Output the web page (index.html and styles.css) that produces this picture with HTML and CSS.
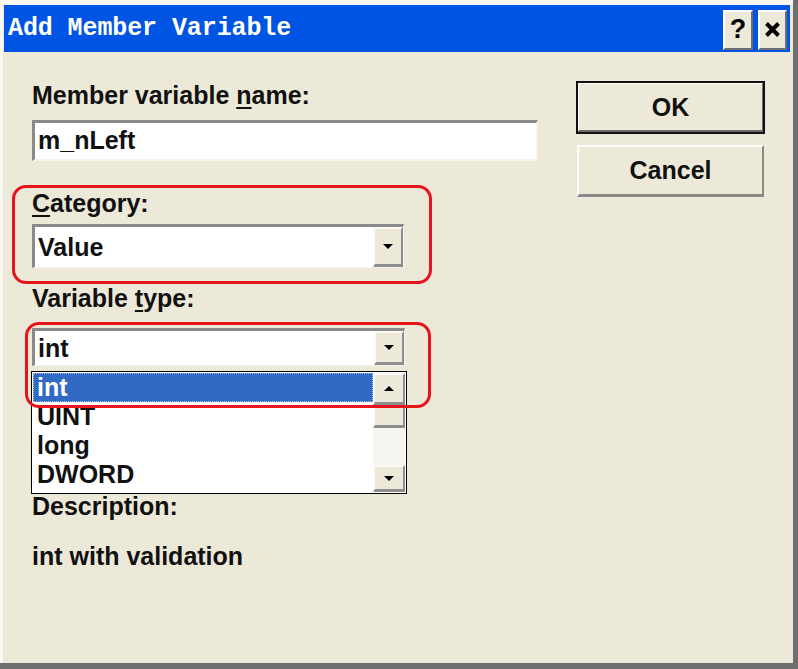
FILE: index.html
```html
<!DOCTYPE html>
<html lang="en">

<head>
    <meta charset="UTF-8">
    <title>Add Member Variable</title>
    <link rel="stylesheet" href="styles.css">
</head>

<body>
    <div class="window">
        <div class="title-bar">
            <span class="title">Add Member Variable</span>
            <div class="title-buttons">
                <div class="title-btn help">?</div>
                <div class="title-btn close">
                    <svg width="17" height="17" viewBox="0 0 17 17">
                        <path d="M2.5 2.5 L14.5 14.5 M14.5 2.5 L2.5 14.5" stroke="#000" stroke-width="4" />
                    </svg>
                </div>
            </div>
        </div>

        <div class="client">
            <div class="fields">
                <div class="label">Member variable <u>n</u>ame:</div>
                <div class="edit">m_nLeft</div>

                <div class="label label-category"><u>C</u>ategory:</div>
                <div class="combo combo-value">
                    <span class="combo-text">Value</span>
                    <span class="drop-btn"><span class="arrow-down"></span></span>
                </div>

                <div class="label label-type">Variable <u>t</u>ype:</div>
                <div class="combo combo-type">
                    <span class="combo-text">int</span>
                    <span class="drop-btn"><span class="arrow-down"></span></span>
                </div>

                <div class="label label-desc">Description:</div>
                <div class="desc-text">int with validation</div>
            </div>

            <div class="buttons">
                <div class="push-btn default">OK</div>
                <div class="push-btn">Cancel</div>
            </div>
        </div>

        <!-- open dropdown of the Variable type combo -->
        <div class="dropdown-list">
            <div class="list-rows">
                <div class="list-row selected">int</div>
                <div class="list-row">UINT</div>
                <div class="list-row">long</div>
                <div class="list-row">DWORD</div>
            </div>
            <div class="scrollbar">
                <span class="scroll-btn"><span class="arrow-up"></span></span>
                <span class="scroll-thumb"></span>
                <span class="scroll-track"></span>
                <span class="scroll-btn"><span class="arrow-down"></span></span>
            </div>
        </div>

        <!-- red annotation marks -->
        <div class="mark mark-category"></div>
        <div class="mark mark-type"></div>
    </div>
</body>

</html>
```

FILE: styles.css
```css
body,
html {
    margin: 0;
    padding: 0;
    background-color: #ece9d8;
}

.window {
    position: relative;
    width: 798px;
    height: 669px;
    box-sizing: border-box;
    padding: 5px 3px 0 4px;
    background-color: #ece9d8;
    border-right: 5px solid #6e6e6e;
    border-bottom: 6px solid #6e6e6e;
    box-shadow: inset 3px 5px 0 #f8f7f2;
    font-family: 'Liberation Sans', Arial, sans-serif;
    font-weight: bold;
    font-size: 25px;
    color: #111;
    overflow: hidden;
}

/* title bar */

.title-bar {
    height: 47px;
    background-color: #0054e3;
    display: flex;
    align-items: center;
    justify-content: space-between;
    padding: 0 3px 0 4px;
}

.title {
    font-family: 'Liberation Mono', 'DejaVu Sans Mono', monospace;
    font-weight: bold;
    font-size: 25px;
    color: white;
    letter-spacing: -0.1px;
}

.title-buttons {
    display: flex;
    gap: 5px;
    margin-top: 2px;
}

.title-btn {
    width: 30px;
    height: 40px;
    box-sizing: border-box;
    background-color: #ece9d8;
    border-top: 2px solid #fff;
    border-left: 2px solid #fff;
    border-right: 2px solid #6d6d6d;
    border-bottom: 2px solid #6d6d6d;
    display: flex;
    align-items: center;
    justify-content: center;
    font-size: 27px;
    font-weight: 900;
    color: #000;
}

.title-btn.close {
    width: 29px;
}

/* dialog body */

.client {
    display: flex;
    padding: 28px 0 0 28px;
}

.fields {
    width: 506px;
    display: flex;
    flex-direction: column;
    align-items: flex-start;
}

.label {
    line-height: 30px;
    height: 30px;
    white-space: nowrap;
}

.label u {
    text-underline-offset: 3px;
}

.edit {
    margin-top: 10px;
    width: 506px;
    height: 41px;
    box-sizing: border-box;
    background-color: white;
    border-top: 3px solid #8a8a8a;
    border-left: 3px solid #8a8a8a;
    border-right: 2px solid #f4f3ee;
    border-bottom: 2px solid #f4f3ee;
    padding-left: 3px;
    line-height: 34px;
}

.label-category {
    margin-top: 27px;
}

.combo {
    display: flex;
    box-sizing: border-box;
    background-color: white;
    border-top: 3px solid #8a8a8a;
    border-left: 3px solid #8a8a8a;
    border-right: 1px solid #f4f3ee;
    border-bottom: 1px solid #f4f3ee;
}

.combo-value {
    margin-top: 6px;
    width: 372px;
    height: 44px;
}

.label-type {
    margin-top: 15px;
}

.combo-type {
    margin-top: 15px;
    width: 373px;
    height: 38px;
}

.combo-text {
    flex: 1;
    padding-left: 3px;
    display: flex;
    align-items: center;
}

.drop-btn {
    width: 30px;
    box-sizing: border-box;
    background-color: #ece9d8;
    border-top: 2px solid #fbfaf6;
    border-left: 2px solid #fbfaf6;
    border-right: 2px solid #8d8d8d;
    border-bottom: 3px solid #8d8d8d;
    display: flex;
    align-items: center;
    justify-content: center;
}

.arrow-down,
.arrow-up {
    width: 0;
    height: 0;
    border-left: 5px solid transparent;
    border-right: 5px solid transparent;
}

.arrow-down {
    border-top: 5px solid #000;
}

.arrow-up {
    border-bottom: 5px solid #000;
}

.label-desc {
    margin-top: 125px;
}

.desc-text {
    margin-top: 20px;
    line-height: 30px;
}

/* OK / Cancel */

.buttons {
    margin-left: 39px;
    margin-top: 2px;
    display: flex;
    flex-direction: column;
    gap: 12px;
}

.push-btn {
    width: 187px;
    height: 52px;
    box-sizing: border-box;
    background-color: #ece9d8;
    border-top: 2px solid #fdfdfb;
    border-left: 2px solid #fdfdfb;
    border-right: 2px solid #8a8a8a;
    border-bottom: 3px solid #8a8a8a;
    display: flex;
    align-items: center;
    justify-content: center;
}

.push-btn.default {
    height: 51px;
    outline: 2px solid #111;
    outline-offset: -1px;
    border-right-color: #6d6d6d;
    border-bottom-color: #6d6d6d;
}

/* dropdown list over the dialog */

.dropdown-list {
    position: absolute;
    left: 31px;
    top: 371px;
    width: 376px;
    height: 123px;
    box-sizing: border-box;
    border: 1px solid #000;
    background-color: white;
    display: flex;
    padding: 1px 1px 1px 1px;
}

.list-rows {
    flex: 1;
    overflow: hidden;
}

.list-row {
    height: 29px;
    line-height: 29px;
    padding-left: 4px;
    white-space: nowrap;
}

.list-row.selected {
    background-color: #316ac5;
    color: white;
    outline: 1px dotted #a9c0e8;
    outline-offset: -1px;
}

.scrollbar {
    width: 32px;
    display: flex;
    flex-direction: column;
}

.scroll-btn,
.scroll-thumb {
    box-sizing: border-box;
    background-color: #ece9d8;
    border-top: 2px solid #fbfaf6;
    border-left: 2px solid #fbfaf6;
    border-right: 2px solid #8d8d8d;
    border-bottom: 3px solid #8d8d8d;
    display: flex;
    align-items: center;
    justify-content: center;
}

.scroll-btn {
    height: 32px;
}

.scroll-btn:last-child {
    height: 27px;
}

.scroll-thumb {
    height: 23px;
}

.scroll-track {
    flex: 1;
    background-color: #f6f5f0;
}

/* annotation marks */

.mark {
    position: absolute;
    box-sizing: border-box;
    border: 3px solid #e8141c;
    border-radius: 14px;
}

.mark-category {
    left: 12px;
    top: 185px;
    width: 420px;
    height: 99px;
}

.mark-type {
    left: 25px;
    top: 322px;
    width: 406px;
    height: 86px;
}
```
